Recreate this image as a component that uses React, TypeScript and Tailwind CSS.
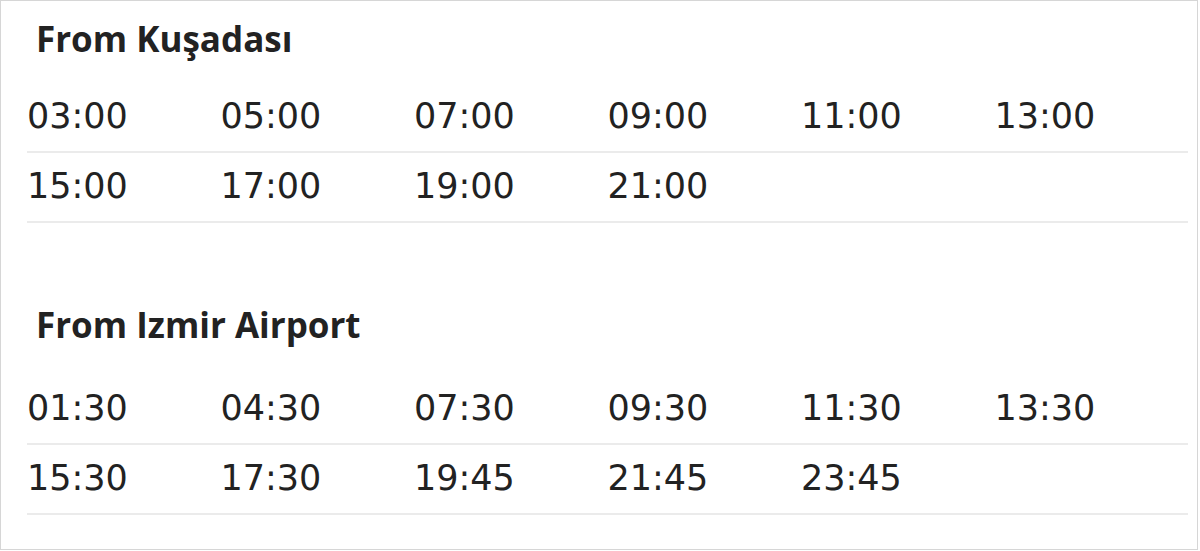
const SCHEDULES = [
  {
    title: 'From Kuşadası',
    gap: 'mt-[20px]',
    rows: [
      ['03:00', '05:00', '07:00', '09:00', '11:00', '13:00'],
      ['15:00', '17:00', '19:00', '21:00'],
    ],
  },
  {
    title: 'From Izmir Airport',
    gap: 'mt-[26px]',
    rows: [
      ['01:30', '04:30', '07:30', '09:30', '11:30', '13:30'],
      ['15:30', '17:30', '19:45', '21:45', '23:45'],
    ],
  },
]

export default function App() {
  return (
    <div className="w-[1198px] h-[550px] border border-[#d6d6d6] bg-white text-[#222] pl-[26px] pr-[9px] pt-[14px]">
      {SCHEDULES.map((s, i) => (
        <div key={s.title} className={i > 0 ? 'mt-[78px]' : ''}>
          <h2 className="pl-[9px] h-[48px] text-[35px] font-bold leading-[48px] font-['Open_Sans',sans-serif]">
            {s.title}
          </h2>
          <div className={s.gap}>
            {s.rows.map((row, r) => (
              <div key={r} className="grid grid-cols-6 h-[70px] border-b-2 border-[#ebebeb] items-center pb-[2px]">
                {row.map((t) => (
                  <span key={t} className="text-[35px] font-['DejaVu_Sans',sans-serif]">{t}</span>
                ))}
              </div>
            ))}
          </div>
        </div>
      ))}
    </div>
  )
}
